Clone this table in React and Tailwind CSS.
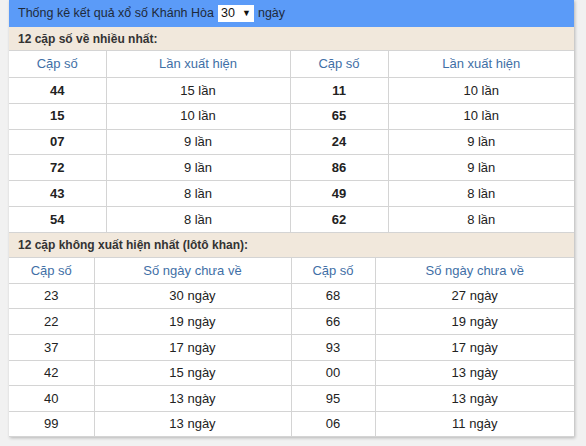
import { useState } from "react";

const TOP = [
  ["44", "15 lần", "11", "10 lần"],
  ["15", "10 lần", "65", "10 lần"],
  ["07", "9 lần", "24", "9 lần"],
  ["72", "9 lần", "86", "9 lần"],
  ["43", "8 lần", "49", "8 lần"],
  ["54", "8 lần", "62", "8 lần"],
];

const KHAN = [
  ["23", "30 ngày", "68", "27 ngày"],
  ["22", "19 ngày", "66", "19 ngày"],
  ["37", "17 ngày", "93", "17 ngày"],
  ["42", "15 ngày", "00", "13 ngày"],
  ["40", "13 ngày", "95", "13 ngày"],
  ["99", "13 ngày", "06", "11 ngày"],
];

function StatTable({ cols, heads, rows, bold, rowH, headH }) {
  return (
    <table className="w-full border-collapse table-fixed text-[13px]">
      <colgroup>
        {cols.map((w, i) => <col key={i} style={{ width: w }} />)}
      </colgroup>
      <thead>
        <tr style={{ height: headH }}>
          {heads.map((h, i) => (
            <th key={i} className="p-0 border border-[#d4d4d4] font-normal text-[#3f6fa6] text-center first:border-l-0 last:border-r-0">{h}</th>
          ))}
        </tr>
      </thead>
      <tbody>
        {rows.map((r, ri) => (
          <tr key={ri} style={{ height: rowH }}>
            {r.map((c, ci) => (
              <td key={ci} className={"p-0 border border-[#d4d4d4] text-center text-[#222] first:border-l-0 last:border-r-0 " + (bold && ci % 2 === 0 ? "font-bold" : "")}>{c}</td>
            ))}
          </tr>
        ))}
      </tbody>
    </table>
  );
}

export default function App() {
  const [days] = useState("30");
  return (
    <div className="w-[586px] h-[446px] bg-[#f1f1f1] pl-[9px] pr-[12px]" style={{ fontFamily: '"Liberation Sans", Arial, sans-serif' }}>
      <div className="bg-white shadow-[1px_1px_3px_rgba(0,0,0,0.25)]">
        <div className="h-[27px] bg-[#5b9bf8] flex items-center px-[9px] text-[12.5px] text-[#1e2a3a]">
          <span>Thống kê kết quả xổ số Khánh Hòa</span>
          <span className="mx-[4px] bg-white h-[17px] w-[36px] flex items-center justify-between px-[3px] text-[#111]">
            {days}<span className="text-[9px]">▼</span>
          </span>
          <span>ngày</span>
        </div>
        <div className="h-[23px] bg-[#f1e8dc] flex items-center px-[9px] text-[12px] font-bold text-[#333]">12 cặp số về nhiều nhất:</div>
        <StatTable cols={["97px", "184px", "98px", "186px"]} heads={["Cặp số", "Lần xuất hiện", "Cặp số", "Lần xuất hiện"]} rows={TOP} bold headH="27px" rowH="25.8px" />
        <div className="h-[24px] bg-[#f1e8dc] flex items-center px-[9px] text-[12px] font-bold text-[#333]">12 cặp không xuất hiện nhất (lôtô khan):</div>
        <StatTable cols={["85px", "197px", "84px", "199px"]} heads={["Cặp số", "Số ngày chưa về", "Cặp số", "Số ngày chưa về"]} rows={KHAN} headH="26px" rowH="25.6px" />
      </div>
    </div>
  );
}
